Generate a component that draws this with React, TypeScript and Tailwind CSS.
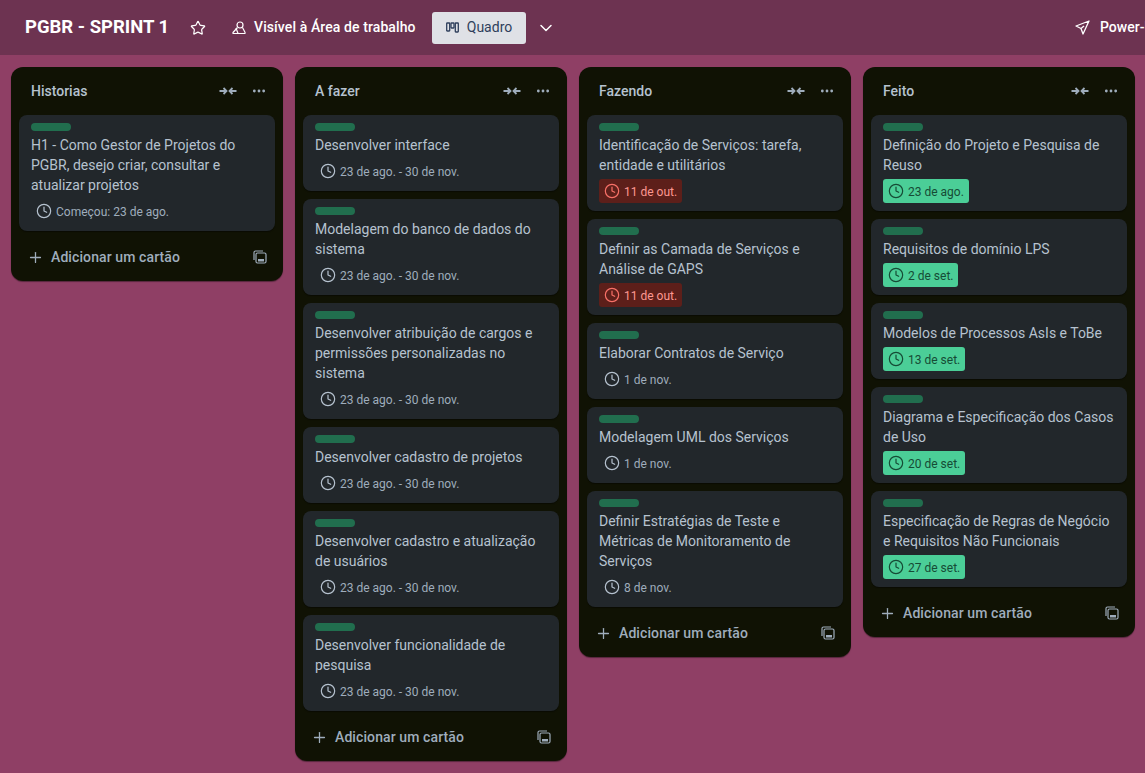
import React from 'react';
import { ChevronDown, Clock, Ellipsis, Plus, Star } from 'lucide-react';

type Tone = 'plain' | 'late' | 'done';

interface Card {
  title: string[];
  date: string;
  tone?: Tone;
}

interface List {
  name: string;
  cards: Card[];
}

const sprint = '23 de ago. - 30 de nov.';

const lists: List[] = [
  {
    name: 'Historias',
    cards: [
      { title: ['H1 - Como Gestor de Projetos do', 'PGBR, desejo criar, consultar e', 'atualizar projetos'], date: 'Começou: 23 de ago.' },
    ],
  },
  {
    name: 'A fazer',
    cards: [
      { title: ['Desenvolver interface'], date: sprint },
      { title: ['Modelagem do banco de dados do', 'sistema'], date: sprint },
      { title: ['Desenvolver atribuição de cargos e', 'permissões personalizadas no', 'sistema'], date: sprint },
      { title: ['Desenvolver cadastro de projetos'], date: sprint },
      { title: ['Desenvolver cadastro e atualização', 'de usuários'], date: sprint },
      { title: ['Desenvolver funcionalidade de', 'pesquisa'], date: sprint },
    ],
  },
  {
    name: 'Fazendo',
    cards: [
      { title: ['Identificação de Serviços: tarefa,', 'entidade e utilitários'], date: '11 de out.', tone: 'late' },
      { title: ['Definir as Camada de Serviços e', 'Análise de GAPS'], date: '11 de out.', tone: 'late' },
      { title: ['Elaborar Contratos de Serviço'], date: '1 de nov.' },
      { title: ['Modelagem UML dos Serviços'], date: '1 de nov.' },
      { title: ['Definir Estratégias de Teste e', 'Métricas de Monitoramento de', 'Serviços'], date: '8 de nov.' },
    ],
  },
  {
    name: 'Feito',
    cards: [
      { title: ['Definição do Projeto e Pesquisa de', 'Reuso'], date: '23 de ago.', tone: 'done' },
      { title: ['Requisitos de domínio LPS'], date: '2 de set.', tone: 'done' },
      { title: ['Modelos de Processos AsIs e ToBe'], date: '13 de set.', tone: 'done' },
      { title: ['Diagrama e Especificação dos Casos', 'de Uso'], date: '20 de set.', tone: 'done' },
      { title: ['Especificação de Regras de Negócio', 'e Requisitos Não Funcionais'], date: '27 de set.', tone: 'done' },
    ],
  },
];

const CollapseIcon = () => (
  <svg width="18" height="10" viewBox="0 0 18 10" fill="none" stroke="currentColor" strokeWidth="1.8">
    <path d="M0.5 5H7M4.5 2L7.5 5L4.5 8" />
    <path d="M17.5 5H11M13.5 2L10.5 5L13.5 8" />
  </svg>
);

const TemplateIcon = () => (
  <svg width="14" height="14" viewBox="0 0 14 14" fill="none" stroke="currentColor" strokeWidth="1.2">
    <path d="M1 10V2.5C1 1.7 1.7 1 2.5 1H10" />
    <rect x="3" y="3" width="10" height="10" rx="1.5" />
    <rect x="5" y="9" width="6" height="2.5" fill="currentColor" stroke="none" />
  </svg>
);

const BoardIcon = () => (
  <svg width="13" height="12" viewBox="0 0 13 12" fill="none" stroke="currentColor" strokeWidth="1.3">
    <rect x="0.7" y="1" width="3" height="8" rx="0.5" />
    <rect x="5" y="1" width="3" height="5" rx="0.5" />
    <rect x="9.3" y="1" width="3" height="9" rx="0.5" />
  </svg>
);

const TeamIcon = () => (
  <svg width="16" height="16" viewBox="0 0 16 16" fill="none" stroke="currentColor" strokeWidth="1.2">
    <circle cx="9" cy="5" r="3" />
    <path d="M6.5 7.5L2 12.5C1.6 13 2 13.5 2.5 13.5H13.5C14 13.5 14.4 13 14.1 12.5L11.5 7.5" />
    <path d="M5 8L7 13.5" />
  </svg>
);

const PlaneIcon = () => (
  <svg width="15" height="15" viewBox="0 0 15 15" fill="none" stroke="currentColor" strokeWidth="1.3" strokeLinejoin="round">
    <path d="M14 1L1 6L6 8.5L8 14Z" />
    <path d="M6 8.5L9 6" />
  </svg>
);

function DateBadge({ date, tone = 'plain' }: { date: string; tone?: Tone }) {
  const toneClass =
    tone === 'late'
      ? 'bg-[#5d1f1a] text-[#fd9891] rounded-[3px]'
      : tone === 'done'
        ? 'bg-[#4bce97] text-[#164b35] rounded-[3px]'
        : 'text-[#9fadbc]';
  const iconClass = tone === 'late' ? 'text-[#f87168]' : tone === 'done' ? 'text-[#164b35]' : 'text-[#b6c2cf]';
  return (
    <div className={`mt-1 flex h-6 w-fit items-center gap-1 px-[5px] text-[12px] ${toneClass}`}>
      <Clock size={16} strokeWidth={1.8} className={iconClass} />
      <span className="relative top-px">{date}</span>
    </div>
  );
}

function TaskCard({ card }: { card: Card }) {
  return (
    <div className="rounded-lg bg-[#22272b] px-3 pt-2 pb-2 shadow-[0_1px_1px_rgba(0,0,0,0.4)]">
      <div className="h-2 w-10 rounded-full bg-[#216e4e]" />
      <div className="mt-1 text-[14px] leading-5 text-[#b6c2cf]">
        {card.title.map((line) => (
          <div key={line} className="whitespace-nowrap">{line}</div>
        ))}
      </div>
      <DateBadge date={card.date} tone={card.tone} />
    </div>
  );
}

function BoardList({ list }: { list: List }) {
  return (
    <div className="w-[272px] shrink-0 self-start rounded-xl bg-[#101204] shadow-[0_1px_1px_rgba(0,0,0,0.4)]">
      <div className="flex h-12 items-center pr-4 pl-5 text-[#9fadbc]">
        <span className="flex-1 text-[14px] font-medium text-[#b6c2cf]">{list.name}</span>
        <CollapseIcon />
        <Ellipsis size={16} strokeWidth={2.2} className="ml-[14px]" />
      </div>
      <div className="flex flex-col gap-2 px-2">
        {list.cards.map((card) => (
          <TaskCard key={card.title[0]} card={card} />
        ))}
      </div>
      <div className="flex h-[50px] items-center pt-0.5 pr-4 pl-4 text-[#9fadbc]">
        <Plus size={17} strokeWidth={1.8} />
        <span className="ml-[7px] flex-1 text-[14px] font-medium tracking-[0.1px]">Adicionar um cartão</span>
        <TemplateIcon />
      </div>
    </div>
  );
}

export default function App() {
  return (
    <div className="flex h-[773px] w-[1145px] flex-col overflow-hidden bg-[#8f3f65] font-['Roboto','Noto_Sans',sans-serif]">
      <header className="flex h-[55px] shrink-0 items-center bg-[#6d3351] pl-[25px] whitespace-nowrap text-white">
        <h1 className="w-[143px] shrink-0 text-[18.5px] font-bold">PGBR - SPRINT 1</h1>
        <Star size={16} strokeWidth={1.8} className="ml-[22px] shrink-0" />
        <div className="ml-[25px] shrink-0"><TeamIcon /></div>
        <span className="ml-[7px] w-[162px] shrink-0 text-[14px] font-medium tracking-[0.1px]">Visível à Área de trabalho</span>
        <div className="ml-4 flex h-8 w-[94px] shrink-0 items-center justify-center gap-2 rounded-[3px] bg-[#dfe1e6] text-[14px] text-[#2f3f5c]">
          <BoardIcon />
          <span>Quadro</span>
        </div>
        <ChevronDown size={20} strokeWidth={1.8} className="ml-[10px] shrink-0" />
        <div className="ml-[519px] shrink-0"><PlaneIcon /></div>
        <span className="ml-[10px] shrink-0 text-[14px] font-medium">Power-Ups</span>
      </header>
      <main className="flex flex-1 items-start gap-3 pt-3 pl-[11px]">
        {lists.map((list) => (
          <BoardList key={list.name} list={list} />
        ))}
      </main>
    </div>
  );
}
